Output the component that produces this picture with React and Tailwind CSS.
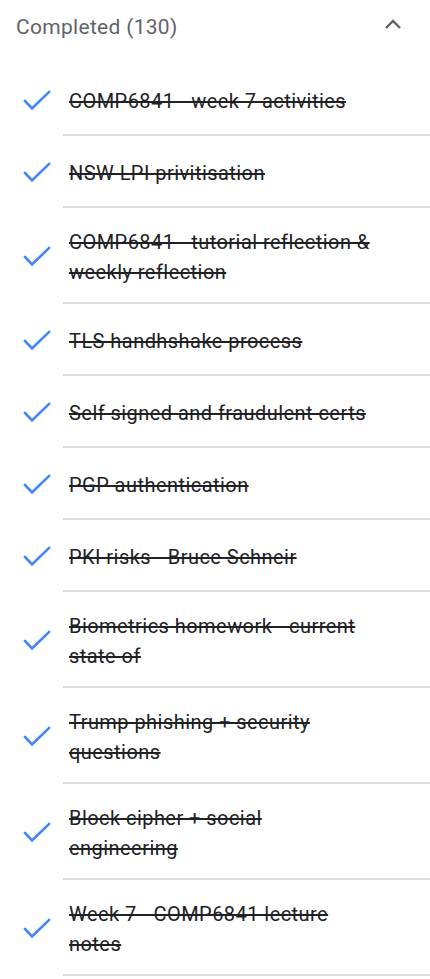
import React from "react";

const items = [
  "COMP6841 - week 7 activities",
  "NSW LPI privitisation",
  "COMP6841 - tutorial reflection & weekly reflection",
  "TLS handhshake process",
  "Self signed and fraudulent certs",
  "PGP authentication",
  "PKI risks - Bruce Schneir",
  "Biometrics homework - current state of",
  "Trump phishing + security questions",
  "Block cipher + social engineering",
  "Week 7 - COMP6841 lecture notes",
];

function Check() {
  return (
    <svg width="28" height="22" viewBox="0 0 28 22" className="shrink-0">
      <polyline
        points="2,11 9,18.5 26,2"
        fill="none"
        stroke="#4285f4"
        strokeWidth="2.6"
        strokeLinecap="square"
      />
    </svg>
  );
}

export default function App() {
  return (
    <div className="w-[430px] bg-white" style={{ fontFamily: "Roboto, 'Liberation Sans', sans-serif" }}>
      <div className="h-[64px] flex items-center justify-between pl-4 pr-[28px]">
        <span className="text-[21px] tracking-[0.3px] text-[#5f6368] leading-none -mt-[10px]">Completed (130)</span>
        <svg width="18" height="12" viewBox="0 0 18 12" className="-mt-[17px]">
          <polyline points="2,10 9,3 16,10" fill="none" stroke="#5f6368" strokeWidth="2.4" />
        </svg>
      </div>
      {items.map((t, i) => (
        <div key={i} className="flex items-center">
          <div className="w-[63px] flex justify-center pl-[10px] shrink-0 mt-[2px]">
            <Check />
          </div>
          <div className="flex-1 border-b-2 border-[#dadce0] min-h-[72px] pt-[19px] pb-[15px] flex items-center pl-[6px] pr-[60px]">
            <span className="text-[20px] tracking-[0.45px] leading-[30px] text-[#202124] line-through decoration-[#202124]">{t}</span>
          </div>
        </div>
      ))}
    </div>
  );
}
